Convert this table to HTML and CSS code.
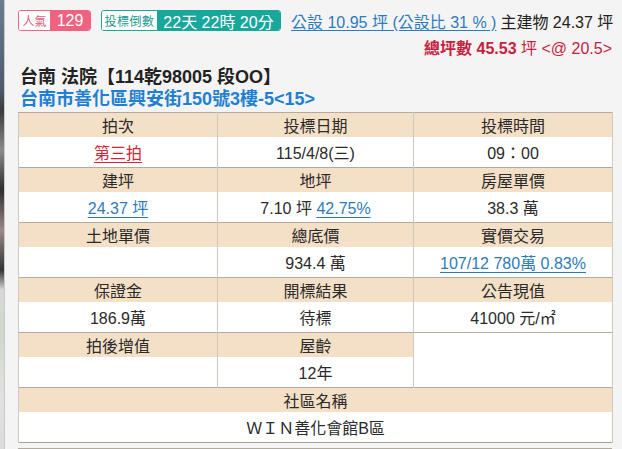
FILE: index.html
```html
<!DOCTYPE html>
<html lang="zh-Hant">
<head>
<meta charset="utf-8">
<link rel="stylesheet" href="styles.css">
</head>
<body>
<div class="page">
  <div class="strip"></div>
  <main class="content">
    <div class="topbar">
      <span class="badge pink"><span class="lbl">人氣</span><span class="val">129</span></span>
      <span class="badge teal"><span class="lbl">投標倒數</span><span class="val">22天 22時 20分</span></span>
      <a class="area" href="#">公設 10.95 坪 (公設比 31 % )</a>
      <span class="mainbuild">主建物 24.37 坪</span>
    </div>
    <div class="total"><b>總坪數 45.53</b> 坪 &lt;@ 20.5&gt;</div>
    <h1 class="title">台南 法院【114乾98005 段OO】</h1>
    <h2 class="addr">台南市善化區興安街150號3樓-5&lt;15&gt;</h2>
    <table class="info">
      <colgroup><col class="c1"><col class="c2"><col class="c3"></colgroup>
      <tr class="hd"><th>拍次</th><th>投標日期</th><th>投標時間</th></tr>
      <tr class="dt"><td><a class="red" href="#">第三拍</a></td><td>115/4/8(三)</td><td>09：00</td></tr>
      <tr class="hd"><th>建坪</th><th>地坪</th><th>房屋單價</th></tr>
      <tr class="dt"><td><a class="blue" href="#">24.37 坪</a></td><td>7.10 坪 <a class="blue" href="#">42.75%</a></td><td>38.3 萬</td></tr>
      <tr class="hd"><th>土地單價</th><th>總底價</th><th>實價交易</th></tr>
      <tr class="dt"><td></td><td>934.4 萬</td><td><a class="blue" href="#">107/12 780萬 0.83%</a></td></tr>
      <tr class="hd"><th>保證金</th><th>開標結果</th><th>公告現值</th></tr>
      <tr class="dt"><td>186.9萬</td><td>待標</td><td>41000 元/㎡</td></tr>
      <tr class="hd"><th>拍後增值</th><th>屋齡</th><td class="blank" rowspan="2"></td></tr>
      <tr class="dt"><td></td><td>12年</td></tr>
      <tr class="hd"><th colspan="3">社區名稱</th></tr>
      <tr class="dt"><td colspan="3">ＷＩＮ善化會館B區</td></tr>
    </table>
    <div class="nextbox"></div>
  </main>
</div>
</body>
</html>
```

FILE: styles.css
```css
html, body {
  margin: 0;
  height: 449px;
  overflow: hidden;
}
body {
  background: #f4f4f4;
  font-family: "Liberation Sans", "Noto Sans CJK TC", sans-serif;
  color: #222;
}
.page {
  display: flex;
  height: 449px;
}
.strip {
  width: 4px;
  flex: none;
  border-right: 1px solid #c9c9c9;
  background: linear-gradient(to bottom, #6d7c90 0, #4d5a6c 90px, #3a3a3a 110px, #8a8a8a 150px, #2e2e2e 190px, #9b8a8a 230px, #333 270px, #d8d8d8 290px, #cfd8c8 330px, #e2e2e2 400px, #dcdcdc 449px);
}
.content {
  width: 594px;
  margin-left: 13px;
  flex: none;
}
.topbar {
  display: flex;
  align-items: center;
  height: 21px;
  margin-top: 10px;
  font-size: 16px;
  white-space: nowrap;
}
.badge {
  display: flex;
  height: 21px;
  box-sizing: border-box;
  border: 1px solid;
  border-radius: 3px;
  overflow: hidden;
  flex: none;
}
.badge .lbl,
.badge .val {
  display: flex;
  align-items: center;
  justify-content: center;
}
.badge .lbl {
  background: #fff;
  font-size: 12px;
}
.badge .val {
  color: #fff;
  font-size: 16px;
}
.pink {
  border-color: #ef6280;
}
.pink .lbl {
  width: 31px;
  color: #e8587a;
}
.pink .val {
  width: 40px;
  background: #ef6280;
}
.teal {
  border-color: #1aa79b;
  margin-left: 10px;
}
.teal .lbl {
  width: 55px;
  color: #1a9a90;
  letter-spacing: 0.5px;
}
.teal .val {
  width: 123px;
  background: #1aa79b;
}
.area {
  margin-left: 10px;
  color: #2c7bbd;
  text-decoration: underline;
  text-underline-offset: 2px;
}
.mainbuild {
  margin-left: 4px;
  color: #222;
}
.total {
  margin-top: 8px;
  text-align: right;
  font-size: 16px;
  line-height: 20px;
  color: #c8203f;
}
.total b {
  font-weight: bold;
}
.title {
  margin: 7px 0 0 2px;
  font-size: 18px;
  line-height: 22px;
  font-weight: bold;
  color: #222;
}
.addr {
  margin: 0 0 0 2px;
  font-size: 18px;
  line-height: 22px;
  font-weight: bold;
  color: #1f7fd3;
}
.info {
  margin-top: 2px;
  width: 594px;
  table-layout: fixed;
  border-collapse: collapse;
  border: 1px solid #aaa196;
  font-size: 16px;
  color: #2a2a2a;
}
.c1 { width: 199px; }
.c2 { width: 196px; }
.c3 { width: 199px; }
.info th,
.info td {
  padding: 0;
  text-align: center;
  font-weight: normal;
  border-left: 1px solid #cfc8c0;
  border-right: 1px solid #cfc8c0;
}
.hd th {
  height: 23px;
  background: #f4e0c6;
  border-top: 1px solid #b3aa9e;
}
.dt td {
  height: 30px;
  background: #fff;
}
.info td.blank {
  background: #fff;
  border-top: 1px solid #b3aa9e;
}
.info a {
  text-decoration: underline;
  text-underline-offset: 3px;
}
.red {
  color: #d42535;
}
.blue {
  color: #2c7bbd;
}
.nextbox {
  margin-top: 5px;
  height: 20px;
  box-sizing: border-box;
  border: 1px solid #b3aa9e;
  background: #f4e0c6;
}
```
